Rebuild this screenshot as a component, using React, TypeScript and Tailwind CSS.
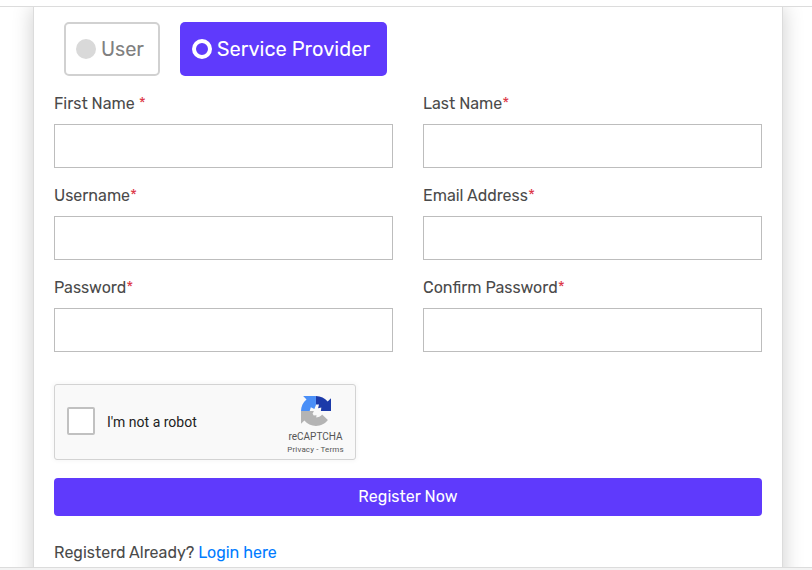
import React from "react";

function Field({ label, spaced = false }: { label: string; spaced?: boolean }) {
  return (
    <label className="block h-[92px]">
      <span className="block h-8 text-[16px] leading-6">
        {label}
        {spaced ? " " : ""}
        <span className="font-light text-[#dc3545]">*</span>
      </span>
      <input className="block h-11 w-full border border-[#bdbdbd] bg-white px-3 outline-none" />
    </label>
  );
}

function RecaptchaLogo() {
  return (
    <svg viewBox="0 0 64 64" className="h-[30px] w-[30px]">
      <path fill="#1c3aa9" d="M64 32V4.687l-7.16 7.16C50.948 4.674 42.033.093 31.9.093V18l6.5 0-2 8 7-1.5-1 7.5z" />
      <path fill="#4a8ff7" d="M31.9.094L4.594.127l7.16 7.16C4.58 13.147 0 22.06 0 32.046h18.5l2.5-8 7.5 3.5 3.4-8.5z" />
      <path fill="#b4b4b4" d="M0 32.045v27.268l7.16-7.16c5.86 7.173 14.774 11.754 24.76 11.754 10.4 0 19.622-4.96 25.458-12.64L45 39.4a15.55 15.55 0 0 1-4.1 4c-2.05 1.3-4.952 2.2-8.5 2.2l.8-4.6-6 .6-2.5-4 2.8-5.5z" />
    </svg>
  );
}

function Recaptcha() {
  return (
    <div className="flex h-[76px] w-[302px] rounded-[3px] border border-[#d3d3d3] bg-[#f9f9f9] font-[Roboto,sans-serif] shadow-[0_0_4px_1px_rgba(0,0,0,0.04)]">
      <div className="flex flex-1 items-center pb-0.5 pl-3">
        <span className="h-7 w-7 rounded-[2px] border-2 border-[#c1c1c1] bg-white" />
        <span className="ml-3 pt-0.5 text-[14px] leading-[17px] text-[#222]">I'm not a robot</span>
      </div>
      <div className="flex w-[79px] flex-col items-center pt-[11px] text-[#555]">
        <RecaptchaLogo />
        <span className="mt-[5px] text-[10px] leading-3">reCAPTCHA</span>
        <span className="mt-0.5 text-[8px] leading-[10px] tracking-[0.13px]">Privacy - Terms</span>
      </div>
    </div>
  );
}

export default function App() {
  return (
    <div className="h-[570px] w-[812px] overflow-hidden bg-[#f3f3f3] font-[Rubik,Roboto,sans-serif] text-[#4a4a4a]">
      <div className="h-1.5 bg-white" />
      <div className="h-[562px] overflow-hidden border-y border-[#dcdcdc] bg-white">
        <main className="ml-[33px] h-[620px] w-[750px] border-x border-[#dcdcdc] bg-white px-5 pt-[15px] shadow-[0_0_20px_rgba(0,0,0,0.2)]">
          <div className="flex gap-5 pl-2.5 text-[20px]">
            <button className="flex h-[54px] w-24 items-center gap-[5px] rounded-[5px] border-2 border-[#d1d1d1] pl-2.5 text-[#808080]">
              <span className="h-5 w-5 rounded-full bg-[#d9d9d9]" />
              <span>User</span>
            </button>
            <button className="flex h-[54px] w-[207px] items-center gap-[5px] rounded-[5px] bg-[#5f3afc] pl-3 text-white">
              <span className="h-5 w-5 rounded-full border-4 border-white" />
              <span className="whitespace-nowrap tracking-[0.05px]">Service Provider</span>
            </button>
          </div>
          <form className="mt-4">
            <div className="grid grid-cols-2 gap-x-[30px]">
              <Field label="First Name" spaced />
              <Field label="Last Name" />
              <Field label="Username" />
              <Field label="Email Address" />
              <Field label="Password" />
              <Field label="Confirm Password" />
            </div>
            <div className="pt-4">
              <Recaptcha />
            </div>
            <button type="button" className="mt-[18px] block h-[38px] w-full rounded-[4px] bg-[#5f3afc] text-[16px] tracking-[0.05px] text-white">
              Register Now
            </button>
            <p className="mt-[25px] text-[16px] leading-6">
              Registerd Already? <a className="text-[#007bff]">Login here</a>
            </p>
          </form>
        </main>
      </div>
    </div>
  );
}
